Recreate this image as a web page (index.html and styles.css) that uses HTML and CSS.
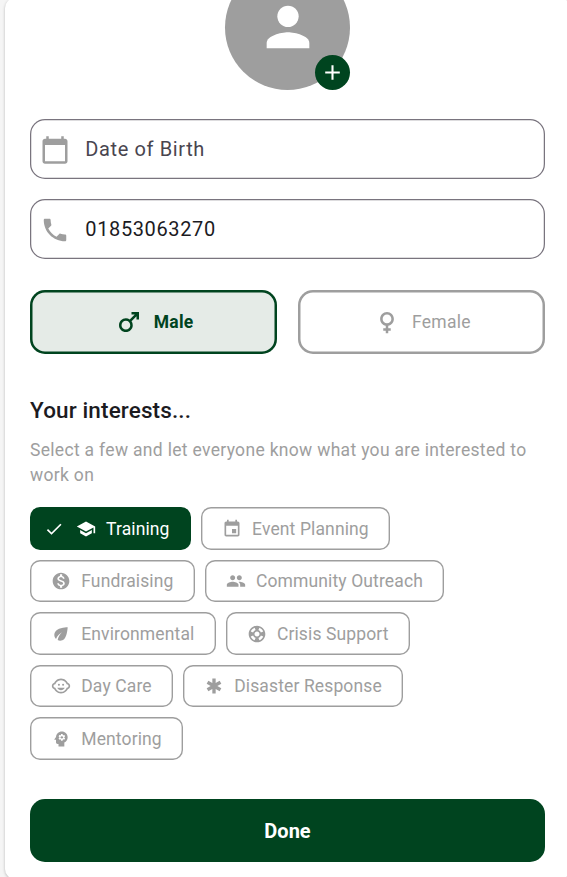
FILE: index.html
```
<!DOCTYPE html>
<html lang="en">
<head>
<meta charset="utf-8">
<title>Profile</title>
<link rel="stylesheet" href="styles.css">
</head>
<body>
<main class="card">
  <div class="avatar">
    <svg class="avatar-icon" viewBox="0 0 24 24"><circle cx="12" cy="8" r="4"/><path d="M12 14c-2.670 0-8 1.340-8 4v2h16v-2c0-2.660-5.330-4-8-4z"/></svg>
    <span class="badge"><svg viewBox="0 0 24 24"><path d="M19 13h-6v6h-2v-6H5v-2h6V5h2v6h6z"/></svg></span>
  </div>
  <div class="field label">
    <svg viewBox="0 0 24 24"><path d="M20 3h-1V1h-2v2H7V1H5v2H4c-1.100 0-2 .9-2 2v16c0 1.100.9 2 2 2h16c1.100 0 2-.9 2-2V5c0-1.100-.9-2-2-2zm0 18H4V8h16v13z"/></svg>
    <span>Date of Birth</span>
  </div>
  <div class="field">
    <svg viewBox="0 0 24 24"><path d="M6.620 10.790c1.440 2.830 3.760 5.140 6.590 6.590l2.200-2.200c.27-.27.67-.36 1.020-.24 1.120.37 2.330.57 3.570.57.55 0 1 .45 1 1V20c0 .55-.45 1-1 1-9.390 0-17-7.610-17-17 0-.55.45-1 1-1h3.500c.55 0 1 .45 1 1 0 1.250.2 2.450.57 3.570.11.35.03.74-.25 1.020l-2.200 2.200z"/></svg>
    <span>01853063270</span>
  </div>
  <div class="genders">
    <button class="gender active">
      <svg viewBox="0 0 24 24"><path d="M9.500 11c1.930 0 3.500 1.570 3.500 3.500S11.430 18 9.500 18 6 16.430 6 14.500 7.570 11 9.500 11zm0-2C6.460 9 4 11.460 4 14.500S6.460 20 9.500 20s5.500-2.460 5.500-5.500c0-1.160-.36-2.230-.97-3.120L18 7.420V10h2V4h-6v2h2.580l-3.970 3.970C11.730 9.360 10.660 9 9.500 9z"/></svg>
      <span>Male</span>
    </button>
    <button class="gender">
      <svg viewBox="0 0 24 24"><path d="M17.500 9.500C17.500 6.460 15.040 4 12 4S6.500 6.460 6.500 9.500c0 2.700 1.940 4.930 4.500 5.400V17H9v2h2v2h2v-2h2v-2h-2v-2.100c2.560-.47 4.500-2.700 4.500-5.400zm-9 0C8.500 7.570 10.070 6 12 6s3.500 1.570 3.500 3.500S13.930 13 12 13s-3.500-1.570-3.500-3.500z"/></svg>
      <span>Female</span>
    </button>
  </div>
  <h2 class="title">Your interests...</h2>
  <p class="hint">Select a few and let everyone know what you are interested to work on</p>
  <div class="chips">
    <button class="chip selected">
      <svg class="check" viewBox="0 0 24 24"><path d="M9 16.170L4.830 12l-1.420 1.410L9 19 21 7l-1.410-1.410z"/></svg>
      <svg viewBox="0 0 24 24"><path d="M5 13.180v4L12 21l7-3.820v-4L12 17l-7-3.820zM12 3L1 9l11 6 9-4.910V17h2V9L12 3z"/></svg>
      <span>Training</span>
    </button>
    <button class="chip">
      <svg viewBox="0 0 24 24"><path d="M17 12h-5v5h5v-5zM16 1v2H8V1H6v2H5c-1.110 0-1.990.9-1.990 2L3 19c0 1.100.89 2 2 2h14c1.100 0 2-.9 2-2V5c0-1.100-.9-2-2-2h-1V1h-2zm3 18H5V8h14v11z"/></svg>
      <span>Event Planning</span>
    </button>
    <button class="chip">
      <svg viewBox="0 0 24 24"><path d="M12 2C6.480 2 2 6.480 2 12s4.480 10 10 10 10-4.480 10-10S17.520 2 12 2zm1.410 16.090V20h-2.670v-1.930c-1.710-.36-3.160-1.460-3.270-3.400h1.960c.1 1.050.82 1.870 2.650 1.870 1.960 0 2.400-.98 2.400-1.590 0-.83-.44-1.610-2.670-2.140-2.480-.6-4.180-1.620-4.180-3.670 0-1.720 1.390-2.840 3.110-3.210V4h2.670v1.950c1.860.45 2.790 1.860 2.850 3.390H14.300c-.05-1.110-.64-1.870-2.220-1.870-1.500 0-2.400.68-2.400 1.640 0 .84.65 1.390 2.670 1.910s4.180 1.390 4.180 3.910c-.01 1.830-1.380 2.830-3.120 3.160z"/></svg>
      <span>Fundraising</span>
    </button>
    <button class="chip">
      <svg viewBox="0 0 24 24"><path d="M16 11c1.660 0 2.990-1.340 2.990-3S17.660 5 16 5c-1.660 0-3 1.340-3 3s1.340 3 3 3zm-8 0c1.660 0 2.990-1.340 2.990-3S9.660 5 8 5C6.340 5 5 6.340 5 8s1.340 3 3 3zm0 2c-2.330 0-7 1.170-7 3.500V19h14v-2.500c0-2.330-4.670-3.500-7-3.500zm8 0c-.29 0-.62.02-.97.05 1.160.84 1.970 1.970 1.970 3.450V19h6v-2.500c0-2.330-4.670-3.500-7-3.500z"/></svg>
      <span>Community Outreach</span>
    </button>
    <button class="chip">
      <svg viewBox="0 0 24 24"><path d="M6.050 8.050c-2.730 2.730-2.730 7.150-.02 9.880 1.470-3.400 4.090-6.240 7.360-7.930-2.770 2.340-4.710 5.610-5.390 9.320 2.600 1.230 5.800.78 7.950-1.370C19.430 14.470 20 4 20 4S9.530 4.570 6.050 8.050z"/></svg>
      <span>Environmental</span>
    </button>
    <button class="chip">
      <svg viewBox="0 0 24 24"><path d="M12 2C6.480 2 2 6.480 2 12s4.480 10 10 10 10-4.480 10-10S17.520 2 12 2zm7.460 7.120l-2.780 1.150c-.51-1.360-1.580-2.440-2.950-2.940l1.150-2.780c2.100.8 3.770 2.470 4.580 4.570zM12 15c-1.660 0-3-1.340-3-3s1.340-3 3-3 3 1.340 3 3-1.340 3-3 3zM9.130 4.540l1.170 2.780c-1.380.5-2.470 1.590-2.980 2.970L4.540 9.130c.81-2.110 2.480-3.780 4.590-4.590zM4.540 14.870l2.780-1.150c.51 1.380 1.590 2.460 2.970 2.960l-1.170 2.780c-2.100-.81-3.770-2.480-4.580-4.590zm10.340 4.590l-1.150-2.780c1.370-.51 2.450-1.590 2.950-2.970l2.780 1.170c-.81 2.100-2.480 3.770-4.580 4.580z"/></svg>
      <span>Crisis Support</span>
    </button>
    <button class="chip">
      <svg viewBox="0 0 24 24"><circle cx="14.5" cy="10.5" r="1.25"/><circle cx="9.5" cy="10.5" r="1.25"/><path d="M22.940 12.660c.04-.21.06-.43.06-.66s-.02-.45-.06-.66c-.25-1.510-1.360-2.740-2.810-3.170-.53-1.120-1.280-2.100-2.190-2.910C16.360 3.850 14.280 3 12 3s-4.360.85-5.940 2.260c-.92.81-1.670 1.800-2.190 2.910-1.450.43-2.560 1.650-2.810 3.170-.04.21-.06.43-.06.66s.02.45.06.66c.25 1.510 1.360 2.740 2.810 3.170.52 1.110 1.270 2.090 2.170 2.890C7.620 20.140 9.710 21 12 21s4.380-.86 5.970-2.280c.9-.8 1.650-1.790 2.170-2.890 1.440-.43 2.550-1.650 2.800-3.170zM19 14c-.1 0-.19-.02-.29-.03-.2.67-.49 1.290-.86 1.860C16.600 17.740 14.450 19 12 19s-4.600-1.260-5.850-3.170c-.37-.57-.66-1.190-.86-1.860-.1.010-.19.030-.29.030-1.100 0-2-.9-2-2s.9-2 2-2c.1 0 .19.020.29.030.2-.67.49-1.290.86-1.860C7.400 6.260 9.550 5 12 5s4.600 1.260 5.850 3.170c.37.57.66 1.190.86 1.860.1-.01.19-.03.29-.03 1.100 0 2 .9 2 2s-.9 2-2 2zM7.500 14c.76 1.770 2.490 3 4.500 3s3.740-1.230 4.500-3h-9z"/></svg>
      <span>Day Care</span>
    </button>
    <button class="chip">
      <svg viewBox="0 0 24 24"><path d="M20.790 9.230l-2-3.460L14 8.540V3h-4v5.540L5.210 5.770l-2 3.460L8 12l-4.790 2.770 2 3.460L10 15.460V21h4v-5.540l4.790 2.770 2-3.460L16 12z"/></svg>
      <span>Disaster Response</span>
    </button>
    <button class="chip">
      <svg viewBox="0 0 24 24"><circle cx="13" cy="10" r="1.430"/><path d="M13 3C9.250 3 6.200 5.940 6.020 9.640L4.100 12.200c-.25.33-.01.8.4.8H6v3c0 1.100.9 2 2 2h1v3h7v-4.680c2.360-1.120 4-3.530 4-6.320 0-3.870-3.130-7-7-7zm3 7c0 .13-.01.26-.02.39l.83.66c.08.06.1.16.05.25l-.8 1.390c-.05.09-.16.12-.24.09l-.99-.4c-.21.16-.43.29-.67.39L14 13.830c-.01.1-.1.17-.2.17h-1.600c-.1 0-.18-.07-.2-.17l-.15-1.060c-.25-.1-.47-.23-.68-.39l-.99.4c-.09.03-.2 0-.25-.09l-.8-1.390c-.05-.08-.03-.19.05-.25l.84-.66c-.01-.13-.02-.26-.02-.39s.02-.27.04-.39l-.85-.66c-.08-.06-.1-.16-.05-.26l.8-1.380c.05-.09.15-.12.24-.09l1 .4c.2-.15.43-.29.67-.39L12 6.170c.02-.1.1-.17.2-.17h1.600c.1 0 .18.07.2.17l.15 1.060c.24.1.46.23.67.39l1-.4c.09-.03.2 0 .24.09l.8 1.380c.05.09.03.2-.05.26l-.85.66c.03.12.04.25.04.39z"/></svg>
      <span>Mentoring</span>
    </button>
  </div>
  <button class="done">Done</button>
</main>
</body>
</html>
```
FILE: styles.css
```
* { box-sizing: border-box; }
body {
  margin: 0;
  height: 877px;
  overflow: hidden;
  background: #f5f5f5;
  font-family: Roboto, sans-serif;
  color: #1c1b1f;
}
button { font-family: inherit; margin: 0; padding: 0; border: 0; }
svg { display: block; flex: none; fill: currentColor; }
.card {
  width: 565px;
  height: 881px;
  margin: -2px 0 0 5px;
  padding: 0 25px;
  background: #fff;
  border-radius: 10px;
  box-shadow: 0 1px 3px rgba(0, 0, 0, .25);
  display: flow-root;
}
.avatar {
  position: relative;
  width: 125px;
  height: 125px;
  margin: -33.5px auto 29.4px;
  border-radius: 50%;
  background: #9e9e9e;
  color: #fff;
  display: flex;
  align-items: center;
  justify-content: center;
}
.avatar-icon { width: 64px; height: 64px; margin-top: -1px; }
.badge {
  position: absolute;
  right: 0;
  bottom: 0;
  width: 35px;
  height: 35px;
  border-radius: 50%;
  background: #00441f;
  display: flex;
  align-items: center;
  justify-content: center;
}
.badge svg { width: 25px; height: 25px; }
.field {
  width: 515px;
  height: 60px;
  margin-bottom: 20px;
  padding-left: 10px;
  box-shadow: inset 0 0 0 1.25px #79747e;
  border-radius: 15px;
  display: flex;
  align-items: center;
  gap: 15.3px;
  font-size: 20px;
  letter-spacing: .625px;
}
.field svg { width: 30px; height: 30px; margin-top: 2px; color: #9e9e9e; }
.field.label { color: #49454f; }
.genders { display: flex; gap: 20.5px; width: 515px; margin-top: 31.2px; }
.gender {
  flex: 1;
  height: 64px;
  box-shadow: inset 0 0 0 2.5px #9e9e9e;
  border-radius: 15px;
  background: #fff;
  color: #9e9e9e;
  display: flex;
  align-items: center;
  justify-content: center;
  gap: 10px;
  font-size: 17.5px;
  letter-spacing: .3px;
}
.gender svg { width: 30px; height: 30px; }
.gender.active {
  box-shadow: inset 0 0 0 2.5px #00441f;
  background: #e5ebe7;
  color: #00441f;
  font-weight: 700;
}
.title {
  margin: 40.8px 0 0;
  font-size: 22.5px;
  line-height: 30px;
  font-weight: 500;
  letter-spacing: .13px;
}
.hint {
  width: 515px;
  margin: 13px 0 19.2px;
  color: #9e9e9e;
  font-size: 17.5px;
  line-height: 25px;
  letter-spacing: .3125px;
}
.chips { display: flex; flex-wrap: wrap; gap: 10px; width: 440px; }
.chip {
  height: 42.5px;
  padding: 1px 21.25px 0;
  box-shadow: inset 0 0 0 1.4px #9e9e9e;
  border-radius: 10px;
  background: #fff;
  color: #9e9e9e;
  display: flex;
  align-items: center;
  gap: 10px;
  font-size: 17.5px;
  letter-spacing: .125px;
}
.chip svg { width: 20px; height: 20px; }
.chip.selected {
  box-shadow: none;
  background: #00441f;
  color: #fff;
  padding-left: 13.5px;
}
.chip .check { margin-right: 2.5px; }
.done {
  display: block;
  width: 515px;
  height: 62.5px;
  margin-top: 39.6px;
  padding-top: 1.5px;
  border-radius: 15px;
  background: #00441f;
  color: #fff;
  font-size: 20px;
  font-weight: 700;
}
```
